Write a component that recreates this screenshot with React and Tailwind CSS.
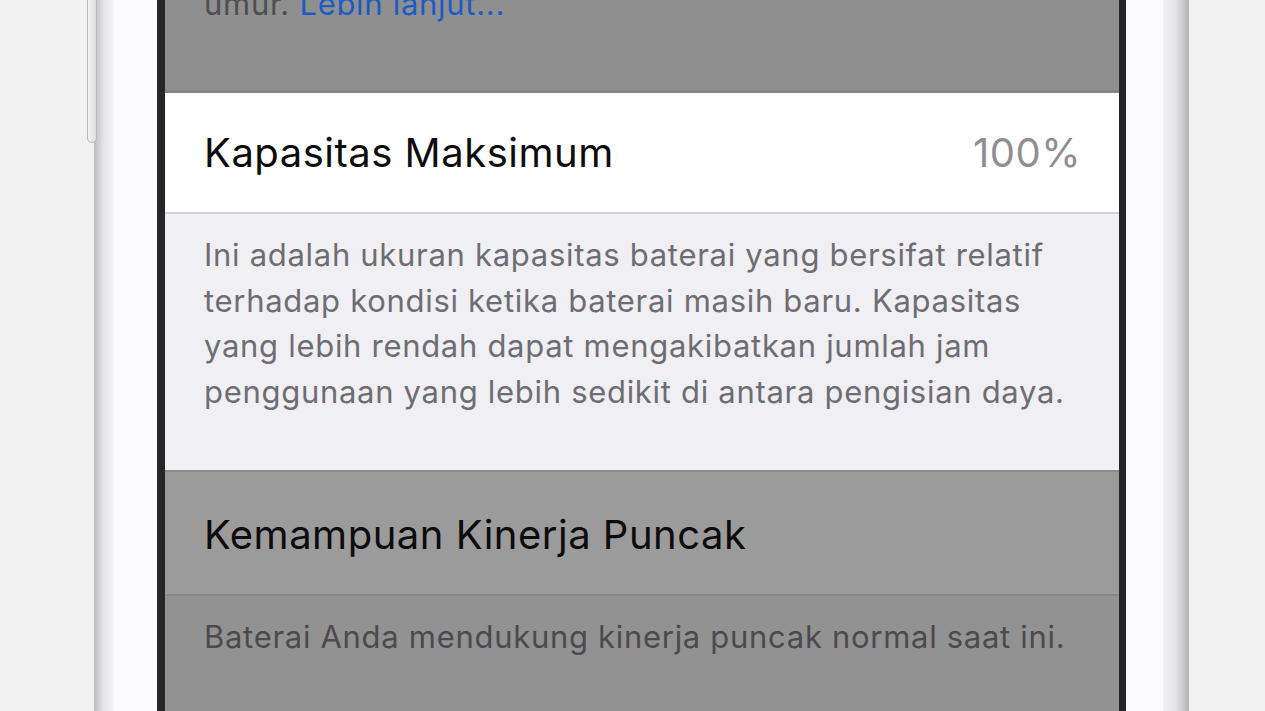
import React from "react";

const font = { fontFamily: "Inter, 'Noto Sans', sans-serif" };

function SideButton() {
  return (
    <div className="absolute left-[87px] top-[-20px] w-[10px] h-[163px] rounded-b-[5px] border border-[#b9b9bb] bg-gradient-to-r from-[#f4f4f4] to-[#dcdcdc]" />
  );
}

function Screen() {
  return (
    <div className="flex-1 flex flex-col bg-[#929293] overflow-hidden" style={font}>
      <div className="h-[93px] shrink-0 bg-[#8f8f90] border-b-[3px] border-[#858586] pl-[39px]">
        <p className="-mt-[19px] text-[31px] leading-[45px] tracking-[0.7px] text-[#4e4e50]">
          umur. <span className="text-[#1d5bc6]">Lebih lanjut...</span>
        </p>
      </div>
      <div className="h-[121px] shrink-0 bg-white border-b-2 border-[#d6d6da] flex items-center justify-between pl-[39px] pr-[38px]">
        <span className="text-[40px] text-[#0c0c0c] tracking-[0.5px]">Kapasitas Maksimum</span>
        <span className="text-[40px] text-[#8e8e93] tracking-[0.5px]">100%</span>
      </div>
      <div className="h-[258px] shrink-0 bg-[#f0eff4] border-b-2 border-[#8a8a8b] pl-[39px] pr-[38px] pt-[18px]">
        <p className="text-[31px] leading-[45.5px] text-[#6d6d72] tracking-[0.7px]">
          Ini adalah ukuran kapasitas baterai yang bersifat relatif terhadap kondisi ketika baterai masih baru. Kapasitas yang lebih rendah dapat mengakibatkan jumlah jam penggunaan yang lebih sedikit di antara pengisian daya.
        </p>
      </div>
      <div className="h-[124px] shrink-0 bg-[#9b9b9b] border-b-2 border-[#878788] flex items-center pl-[39px] pt-[3px]">
        <span className="text-[40px] text-[#0c0c0c] tracking-[0.5px]">Kemampuan Kinerja Puncak</span>
      </div>
      <div className="flex-1 bg-[#929293] pl-[39px] pt-[18px]">
        <p className="text-[31px] leading-[45px] text-[#4b4b4d] tracking-[0.7px]">
          Baterai Anda mendukung kinerja puncak normal saat ini.
        </p>
      </div>
    </div>
  );
}

export default function App() {
  return (
    <div className="relative w-[1265px] h-[711px] overflow-hidden bg-[#f1f1f1] flex">
      <div className="w-[94px] shrink-0" />
      <div className="w-[1095px] shrink-0 flex">
        <div className="w-[20px] shrink-0 bg-gradient-to-r from-[#bcbcbe] via-[#e6e6e8] to-[#f4f5f7]" />
        <div className="w-[43px] shrink-0 bg-[#fbfbfd]" />
        <div className="w-[8px] shrink-0 bg-[#262627]" />
        <Screen />
        <div className="w-[7px] shrink-0 bg-[#262627]" />
        <div className="w-[37px] shrink-0 bg-[#fbfbfd]" />
        <div className="w-[26px] shrink-0 bg-gradient-to-r from-[#f2f2f4] via-[#e3e3e5] to-[#b3b3b5]" />
      </div>
      <SideButton />
    </div>
  );
}
